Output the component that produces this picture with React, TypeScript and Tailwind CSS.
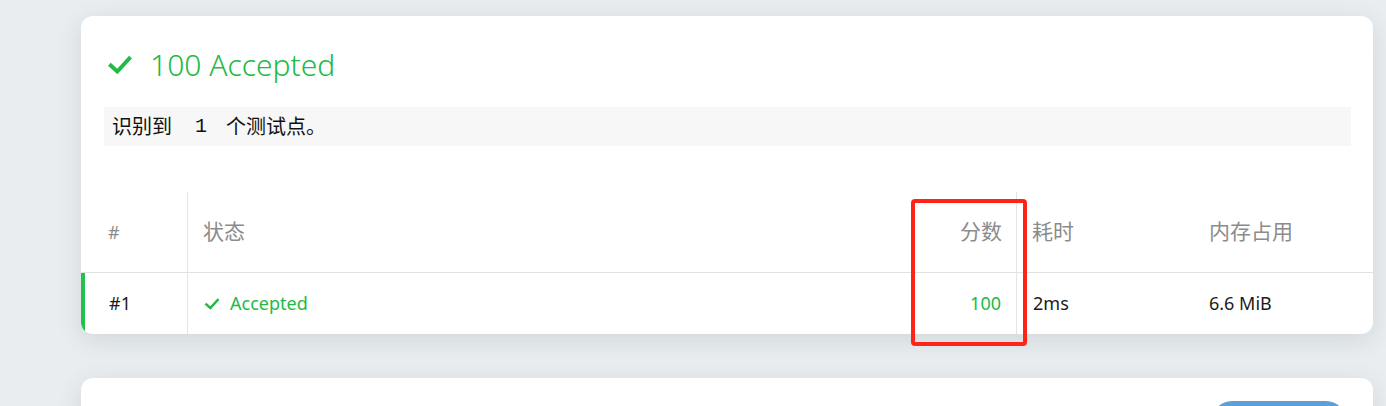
import React from "react";

const Check = ({ className }: { className?: string }) => (
  <svg viewBox="0 0 24 24" className={className} fill="none" stroke="currentColor" strokeWidth={3.6} strokeLinecap="square">
    <path d="M3.5 12.5 L9.5 18 L20.5 6" />
  </svg>
);

export default function App() {
  return (
    <div
      className="w-[1386px] h-[406px] overflow-hidden bg-[#e9edf0] pt-[16px] pl-[81px]"
      style={{ fontFamily: '"Segoe UI", "Noto Sans", "Noto Sans CJK SC", sans-serif' }}
    >
      <div className="relative w-[1292px] rounded-xl bg-white shadow-[0_6px_24px_rgba(60,75,90,0.14)]">
        <div className="px-[23px] pr-[22px] pt-[27px]">
          <div className="flex items-center h-[44px]">
            <Check className="ml-[3px] w-[26px] h-[26px] text-[#21ba45]" />
            <span className="ml-[17px] text-[30px] font-light text-[#21ba45] leading-none">100 Accepted</span>
          </div>
          <div className="mt-[20px] h-[39px] bg-[#f7f7f7] flex items-center pl-[8px] text-[20px] text-[#111]">
            识别到<span className="font-['Liberation_Mono',monospace] text-[20px] pl-[23px] pr-[19px]">1</span>个测试点。
          </div>
        </div>
        <div className="mt-[46px] text-[18px]">
          <div className="grid grid-cols-[106px_729px_101px_179px_177px] h-[81px] border-b border-[#e2e2e2] text-[#8c8c8c] text-[21px]">
            <div className="flex items-center pl-[27px] text-[18px]">#</div>
            <div className="flex items-center pl-[15px] border-l border-[#e4e4e4]">状态</div>
            <div className="flex items-center justify-end pr-[14px] border-r border-[#e4e4e4]">分数</div>
            <div className="flex items-center pl-[15px]">耗时</div>
            <div className="flex items-center pl-[13px]">内存占用</div>
          </div>
          <div className="grid grid-cols-[106px_729px_101px_179px_177px] h-[61px] rounded-bl-xl overflow-hidden text-[#1b1b1b]">
            <div className="flex items-center pl-[24px] border-l-[4px] border-[#21c14a]">#1</div>
            <div className="flex items-center pl-[16px] border-l border-[#e4e4e4] text-[#21ba45]">
              <Check className="w-[16px] h-[16px]" />
              <span className="ml-[10px]">Accepted</span>
            </div>
            <div className="flex items-center justify-end pr-[15px] border-r border-[#e4e4e4] text-[#21ba45]">100</div>
            <div className="flex items-center pl-[16px]">2ms</div>
            <div className="flex items-center pl-[13px]">6.6 MiB</div>
          </div>
        </div>
        <div className="absolute left-[830px] top-[183px] w-[116px] h-[147px] border-[4px] border-[#ff2418] rounded-[4px]" />
      </div>
      <div className="mt-[44px] w-[1292px] h-[60px] rounded-xl bg-white shadow-[0_6px_24px_rgba(60,75,90,0.14)] flex justify-end pr-[27px] pt-[23px]">
        <div className="w-[134px] h-[40px] rounded-full bg-[#5f9fd6]" />
      </div>
    </div>
  );
}
